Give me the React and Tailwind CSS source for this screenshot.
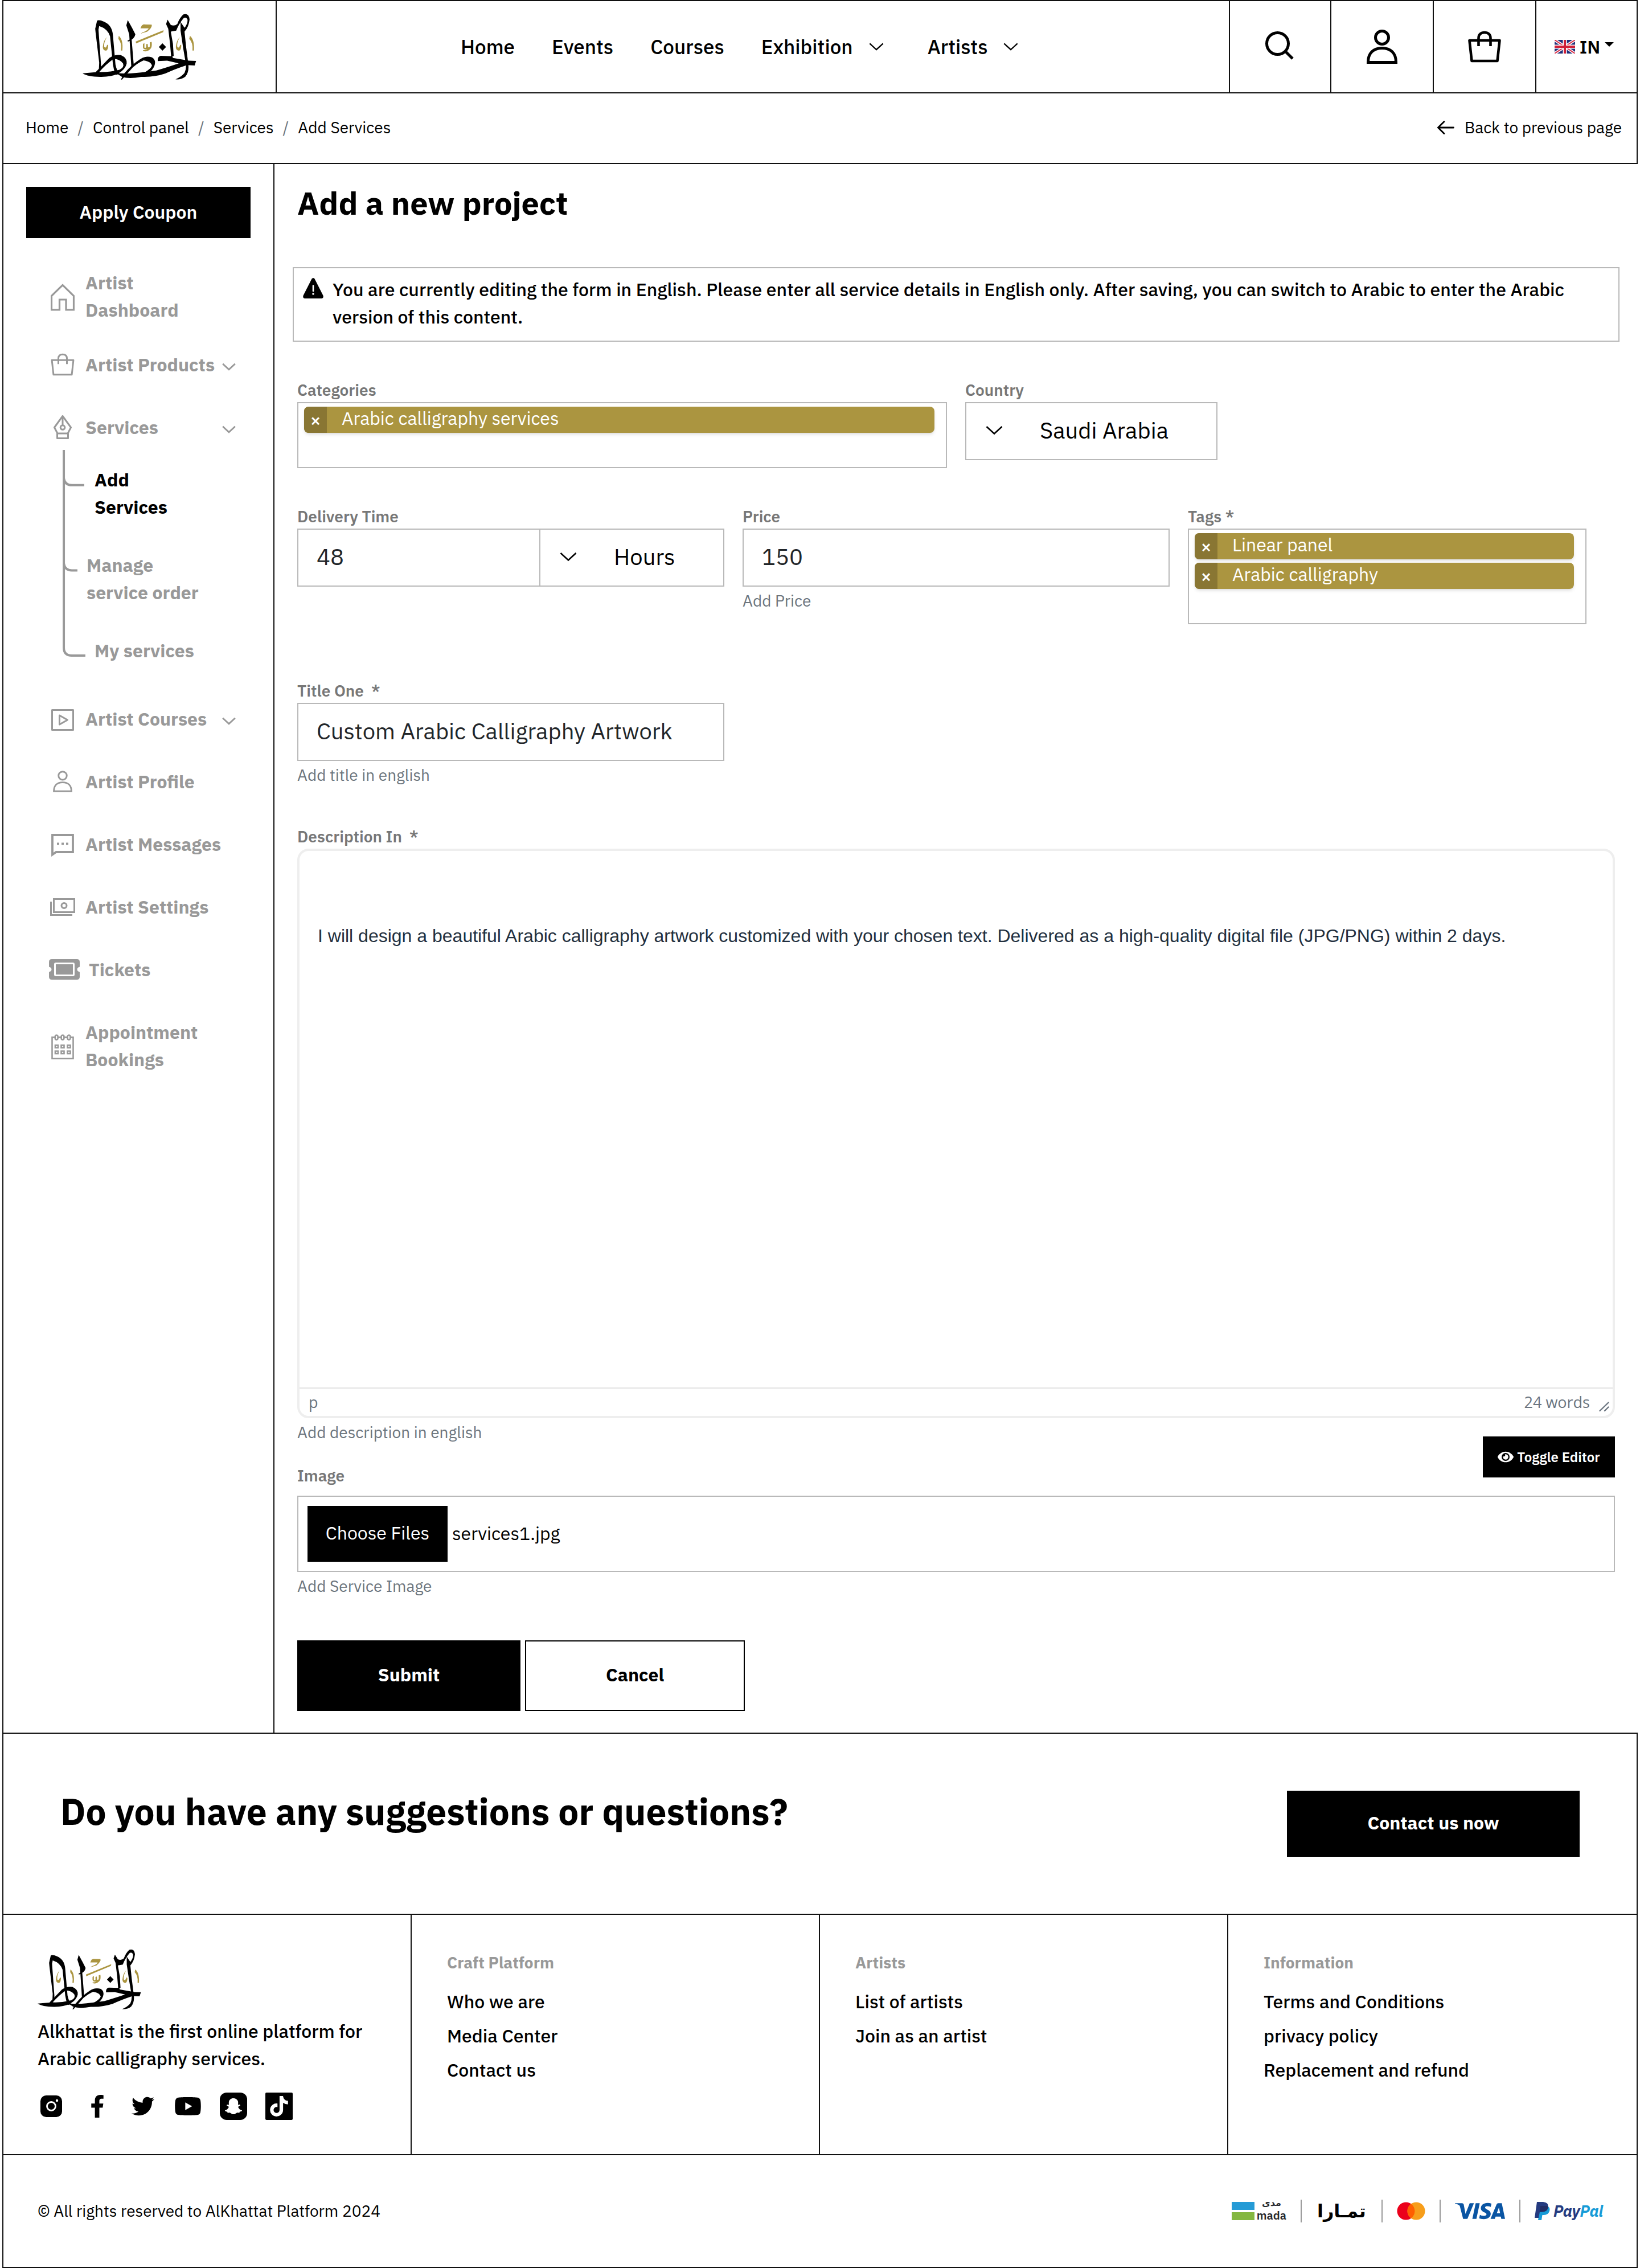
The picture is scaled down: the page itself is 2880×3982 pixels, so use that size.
import React from "react";
import { FaEye, FaFacebookF, FaSnapchatGhost, FaTiktok, FaTwitter, FaYoutube } from "react-icons/fa";
import { SiVisa } from "react-icons/si";

const line = "border-[#111111]";
const fieldBorder = "border-2 border-[#b9b9b9]";
const labelClass = "block text-[28px] leading-[42px] font-semibold text-[#777777]";
const helpClass = "mt-1 block text-[28px] leading-[42px] text-[#6c757d]";

function Logo({ className }) {
  return (
    <svg className={className} viewBox="226 70 315 351" preserveAspectRatio="none" role="img" aria-label="Alkhattat">
      <g fill="#000">
        <path d="M261 150 L266 108 Q270 100 285 112 Q308 130 310 185 L317 340 Q320 370 328 390 L318 395 Q312 370 310 340 L302 190 Q295 150 272 136 L270 155 L277 340 L277 355 L271 372 L272 330 L262 170 Z" />
        <path fillRule="evenodd" d="M226 387 L262 381 Q285 335 300 305 Q315 285 332 290 Q350 305 348 335 Q345 365 325 388 Q305 407 275 406 Q240 405 226 387 Z M272 380 Q290 340 312 310 Q330 312 338 335 Q342 355 328 368 Q300 382 272 380 Z" />
        <path d="M351 104 L363 146 L372 180 Q370 205 352 218 L350 214 Q361 205 361 190 L367 330 L368 345 L361 357 L355 180 L347 132 Z" />
        <path d="M318 385 Q345 392 375 385 Q400 380 430 372 Q465 352 492 334 L460 320 L434 322 Q433 298 442 294 L474 296 L476 305 L520 320 L540 321 L536 345 L515 343 Q480 365 455 388 Q425 408 388 406 Q355 418 335 406 Z" />
        <path d="M340 390 Q362 340 385 312 Q400 292 418 302 Q430 315 425 345 Q420 372 405 390 L393 387 Q416 362 418 345 Q415 325 395 318 Q380 330 365 355 L350 388 L335 420 L332 420 Z" />
        <path d="M447 227 L457 247 L447 267 L437 247 Z" />
        <path d="M461 102 L470 130 Q480 138 488 125 Q495 90 505 74 Q520 66 522 100 Q520 140 508 165 L512 240 L518 330 Q522 380 510 405 Q498 422 483 419 Q500 405 508 385 Q513 365 512 340 L504 250 L497 160 L497 114 L508 145 Q518 120 516 100 Q512 85 505 95 Q492 125 485 160 L470 165 L476 230 L478 295 L471 300 L468 230 L463 150 L457 125 Z" />
      </g>
      <g fill="#ab9540">
        <path d="M395 127 L417 128 Q420 142 405 165 L387 176 Q388 172 400 163 Q410 152 408 148 L386 148 L390 132 Z" />
        <path d="M373 218 L450 158 L449 168 L374 228 Z" />
        <path d="M326 188 Q339 208 336 266 L332 266 Q335 225 325 204 Z" />
        <path d="M523 188 Q536 208 534 266 L530 266 Q532 225 521 204 Z" />
        <path d="M293 194 Q284 225 286 247 Q291 257 294 235 L297 238 Q297 262 291 267 Q282 266 282 247 Q283 215 293 194 Z" />
        <path d="M495 194 Q486 225 488 247 Q493 257 496 235 L499 238 Q499 262 493 267 Q484 266 484 247 Q485 215 495 194 Z" />
        <path d="M397 226 L397 250 Q400 254 402 248 L402 232 L406 230 L407 248 Q410 252 412 244 L412 222 L417 220 Q419 250 413 258 Q405 274 394 269 L393 264 Q403 264 405 258 Q396 264 393 250 L393 232 Z" />
      </g>
    </svg>
  );
}

function Chevron({ className, strokeWidth = "2.6" }) {
  return (
    <svg className={className} viewBox="0 0 30 16" fill="none" stroke="currentColor" strokeWidth={strokeWidth} aria-hidden="true">
      <path d="M1.5 1.5 L15 14 L28.5 1.5" />
    </svg>
  );
}

function PersonIcon({ className, strokeWidth }) {
  return (
    <svg className={className} viewBox="0 0 54 60" fill="none" stroke="currentColor" strokeWidth={strokeWidth} aria-hidden="true">
      <circle cx="27" cy="14" r="11.5" />
      <path d="M2.5 57.5 C2.5 41 12 32.5 27 32.5 S51.5 41 51.5 57.5 Z" />
    </svg>
  );
}

function BagIcon({ className, strokeWidth }) {
  return (
    <svg className={className} viewBox="0 0 58 56" fill="none" stroke="currentColor" strokeWidth={strokeWidth} strokeLinejoin="round" aria-hidden="true">
      <path d="M2.5 17 H55.5 L51.5 53 H6.5 Z" />
      <path d="M18.5 27 V13 C18.5 6 23 3 29 3 S39.5 6 39.5 13 V27" />
    </svg>
  );
}

function HomeIcon() {
  return (
    <svg className="mt-1 h-12 w-[42px]" viewBox="0 0 42 48" fill="none" stroke="currentColor" strokeWidth="3.2" aria-hidden="true">
      <path d="M1.5 46 V21.5 L21 2.5 L40.5 21.5 V46 H27 V28 H15.5 V46 Z" />
    </svg>
  );
}

function NibIcon() {
  return (
    <svg className="h-[42px] w-8" viewBox="0 0 32 42" fill="none" stroke="currentColor" strokeWidth="3" strokeLinejoin="round" aria-hidden="true">
      <path d="M16 1.5 L30.5 21.5 L25 32 H7 L1.5 21.5 Z M6.5 32 V40.5 H25.5 V32 M16 2 V18" />
      <circle cx="16" cy="21.5" r="3.8" />
    </svg>
  );
}

function PlayIcon() {
  return (
    <svg className="mt-1 h-[38px] w-10" viewBox="0 0 40 38" fill="none" stroke="currentColor" strokeWidth="3" strokeLinejoin="round" aria-hidden="true">
      <path d="M1.5 1.5 H38.5 V36.5 H1.5 Z M14.5 11 L28.5 19 L14.5 27 Z" />
    </svg>
  );
}

function MessageIcon() {
  return (
    <svg className="mt-1 h-10 w-10" viewBox="0 0 40 40" fill="none" stroke="currentColor" strokeWidth="3.8" aria-hidden="true">
      <path d="M2 2 H38 V32 H8.5 L2 36.500 Z" />
      <path d="M10 17.5 H14 M18 17.5 H22 M26 17.5 H30" strokeWidth="4" />
    </svg>
  );
}

function CashIcon() {
  return (
    <svg className="h-[31px] w-11" viewBox="0 0 44 31" fill="none" stroke="currentColor" strokeWidth="3" aria-hidden="true">
      <path d="M6.5 1.5 H42.5 V24.5 H6.5 Z M1.5 6 V29.5 H39" />
      <circle cx="24.5" cy="13" r="4.5" />
    </svg>
  );
}

function TicketIcon() {
  return (
    <svg className="h-9 w-[54px]" viewBox="0 0 54 36" aria-hidden="true">
      <path fill="currentColor" fillRule="evenodd" d="M5 0 H49 Q54 0 54 5 V13.5 Q49.5 14.5 49.5 18 T54 22.5 V31 Q54 36 49 36 H5 Q0 36 0 31 V22.5 Q4.500 21.5 4.5 18 T0 13.5 V5 Q0 0 5 0 Z M12 6 Q9 6 9 9 V27 Q9 30 12 30 H42 Q45 30 45 27 V9 Q45 6 42 6 Z" />
      <rect x="12" y="9" width="30" height="18" fill="currentColor" />
    </svg>
  );
}

function CalendarIcon() {
  return (
    <svg className="mt-1 h-11 w-10" viewBox="0 0 40 44" fill="none" stroke="currentColor" strokeWidth="2.6" aria-hidden="true">
      <path d="M6 5 H1.5 V42.5 H38.5 V5 H34 M12 5 H17.5 M22.5 5 H28" />
      <rect x="6.8" y="1.5" width="4.8" height="8" rx="2.4" />
      <rect x="17.6" y="1.5" width="4.8" height="8" rx="2.4" />
      <rect x="28.6" y="1.5" width="4.8" height="8" rx="2.4" />
      <path d="M7 19 H12 V23.5 H7 Z M17.5 19 H22.5 V23.5 H17.5 Z M28.5 19 H33.5 V23.5 H28.5 Z M7 29.5 H12 V34 H7 Z M17.5 29.5 H22.5 V34 H17.5 Z M28.5 29.5 H33.5 V34 H28.5 Z" />
    </svg>
  );
}

function Flag() {
  return (
    <svg className="h-6 w-9" viewBox="0 0 36 24" aria-hidden="true">
      <rect width="36" height="24" fill="#1f2f7a" />
      <path d="M0 0 L36 24 M36 0 L0 24" stroke="#fff" strokeWidth="5" />
      <path d="M0 0 L36 24 M36 0 L0 24" stroke="#d8304a" strokeWidth="2" />
      <path d="M18 0 V24 M0 12 H36" stroke="#fff" strokeWidth="7" />
      <path d="M18 0 V24 M0 12 H36" stroke="#cf1f38" strokeWidth="4" />
    </svg>
  );
}

const navLinks = [
  { label: "Home" },
  { label: "Events" },
  { label: "Courses" },
  { label: "Exhibition", menu: true },
  { label: "Artists", menu: true },
];

function Header() {
  return (
    <header className={`flex h-[164px] border-2 ${line}`}>
      <a href="#" className={`flex w-[480px] items-center justify-center border-r-2 ${line}`}>
        <Logo className="h-[116px] w-[200px]" />
      </a>
      <nav className="flex flex-1 items-center gap-[65px] pl-[323px] text-[35px] leading-[52px] font-medium">
        {navLinks.map((item) => (
          <a key={item.label} href="#" className={item.menu ? "flex items-center gap-7 pr-3" : ""}>
            {item.label}
            {item.menu && <Chevron className="h-4 w-[26px]" />}
          </a>
        ))}
      </nav>
      <button aria-label="Search" className={`flex w-[178px] items-center justify-center border-l-2 ${line} pr-0.5 pb-1`}>
        <svg className="h-[50px] w-[50px]" viewBox="0 0 50 50" fill="none" stroke="currentColor" strokeWidth="5">
          <circle cx="21.5" cy="21.5" r="19" />
          <path d="M35 35 L48 48" />
        </svg>
      </button>
      <button aria-label="Account" className={`flex w-[180px] items-center justify-center border-l-2 ${line}`}>
        <PersonIcon className="h-[60px] w-[54px]" strokeWidth="5" />
      </button>
      <button aria-label="Cart" className={`flex w-[180px] items-center justify-center border-l-2 ${line}`}>
        <BagIcon className="h-14 w-[58px]" strokeWidth="4.6" />
      </button>
      <button className={`flex w-[178px] items-center justify-center gap-2 border-l-2 ${line} pr-2`}>
        <Flag />
        <span className="text-[32px] leading-[48px] font-semibold">IN</span>
        <svg className="mb-2 h-2 w-4" viewBox="0 0 16 8" aria-hidden="true">
          <path d="M0 0 H16 L8 8 Z" />
        </svg>
      </button>
    </header>
  );
}

const crumbs = ["Home", "Control panel", "Services", "Add Services"];

function Breadcrumb() {
  return (
    <div className={`flex h-[124px] items-center justify-between border-x-2 border-b-2 ${line} pr-[26px] pb-0.5 pl-[39px] text-[28px] leading-[42px]`}>
      <nav aria-label="Breadcrumb">
        <ol className="flex gap-4">
          {crumbs.map((crumb, i) => (
            <li key={crumb} className="flex gap-4">
              {i > 0 && <span className="text-[#6c757d]">/</span>}
              <a href="#">{crumb}</a>
            </li>
          ))}
        </ol>
      </nav>
      <a href="#" className="flex items-center gap-[18px]">
        <svg className="h-6 w-[30px]" viewBox="0 0 30 24" fill="none" stroke="currentColor" strokeWidth="2.8" strokeLinecap="round" aria-hidden="true">
          <path d="M28.5 12 H2 M12 1.5 L1.5 12 L12 22.5" />
        </svg>
        Back to previous page
      </a>
    </div>
  );
}

const iconBox = "flex w-12 shrink-0 justify-center";

function SideLink({ icon, label, menu, wide }) {
  return (
    <a href="#" className="flex items-center gap-4">
      <span className={wide ? "flex w-[54px] shrink-0" : iconBox}>{icon}</span>
      <span className="flex-1 whitespace-pre">{label}</span>
      {menu && <Chevron className="-ml-6 h-3.5 w-6 translate-y-1" strokeWidth="3.6" />}
    </a>
  );
}

function Sidebar() {
  return (
    <aside className={`w-[476px] shrink-0 border-r-2 ${line} px-10 pt-10`}>
      <button className="h-[90px] w-full bg-black pb-0.5 text-[32px] leading-[48px] font-semibold text-white">Apply Coupon</button>
      <nav className="mt-[54px] flex flex-col gap-[62px] pr-[26px] pl-10 text-[32px] leading-[48px] font-bold text-[#999999]">
        <div className="flex flex-col gap-12">
          <SideLink icon={<HomeIcon />} label={"Artist\nDashboard"} />
          <SideLink icon={<BagIcon className="h-10 w-[42px]" strokeWidth="4.2" />} label="Artist Products" menu />
        </div>
        <div className="pb-2.5">
          <SideLink icon={<NibIcon />} label="Services" menu />
          <div className="mt-4 flex pl-6">
            <svg className="h-[363px] w-10 shrink-0" viewBox="0 0 40 364" fill="none" stroke="currentColor" strokeWidth="4" aria-hidden="true">
              <path d="M2 0 V348 Q2 362 16 362 H40" />
              <path d="M2 50 Q4 62 16 62 H38 M2 200 Q4 212 16 212 H26" />
            </svg>
            <ul className="flex flex-col gap-[54px] pt-7 pl-0.5">
              <li><a href="#" className="block pl-3.5 whitespace-pre text-black">{"Add\nServices"}</a></li>
              <li><a href="#" className="block whitespace-pre">{"Manage\nservice order"}</a></li>
              <li><a href="#" className="block pl-3.5">My services</a></li>
            </ul>
          </div>
        </div>
        <SideLink icon={<PlayIcon />} label="Artist Courses" menu />
        <SideLink icon={<PersonIcon className="h-[38px] w-[34px]" strokeWidth="4.6" />} label="Artist Profile" />
        <SideLink icon={<MessageIcon />} label="Artist Messages" />
        <SideLink icon={<CashIcon />} label="Artist Settings" />
        <SideLink icon={<TicketIcon />} label="Tickets" wide />
        <SideLink icon={<CalendarIcon />} label={"Appointment\nBookings"} />
      </nav>
    </aside>
  );
}

function Chip({ children }) {
  return (
    <li className="flex h-[46px] overflow-hidden rounded-lg bg-[#ab9540] text-white shadow-md">
      <button type="button" aria-label={`Remove ${children}`} className="w-10 bg-[#897633] text-[32px] leading-[46px] font-medium">×</button>
      <span className="pl-[26px] text-[32px] leading-[40px]">{children}</span>
    </li>
  );
}

function ChipBox({ labelledBy, items, className }) {
  return (
    <ul aria-labelledby={labelledBy} className={`flex flex-col gap-1.5 ${fieldBorder} pt-1.5 pr-5 pl-2.5 ${className}`}>
      {items.map((item) => <Chip key={item}>{item}</Chip>)}
    </ul>
  );
}

function SelectBox({ id, label, value, className }) {
  return (
    <div className={`relative ${className}`}>
      <select id={id} aria-label={label} defaultValue={value} className={`h-[102px] w-full appearance-none ${fieldBorder} bg-white pb-1 pl-[129px] text-[40px] leading-[60px] text-black`}>
        <option>{value}</option>
      </select>
      <Chevron className="pointer-events-none absolute top-[41px] left-9 h-[17px] w-[30px]" />
    </div>
  );
}

const inputClass = `h-[102px] w-full min-w-0 ${fieldBorder} bg-white px-8 pb-1 text-[40px] leading-[60px] text-[#212529] outline-none`;

function ServiceForm() {
  return (
    <main className="min-w-0 flex-1 px-10 pt-[34px] pb-[38px]">
      <h1 className="text-[56px] leading-[68px] font-bold">Add a new project</h1>
      <div role="note" className={`-mx-2 mt-[79px] flex gap-4 ${fieldBorder} px-4 pt-[13px] pb-[18px]`}>
        <svg className="mt-1 h-9 w-9 shrink-0" viewBox="0 0 36 36" aria-hidden="true">
          <path d="M15.5 1.5 Q18 -1.5 20.5 1.5 L35.5 31 Q36.5 35.5 33 36 H3 Q-0.5 35.5 0.5 31 Z" />
          <path d="M18 13.5 V23" stroke="#fff" strokeWidth="2.6" strokeLinecap="round" />
          <circle cx="18" cy="28" r="1.8" fill="#fff" />
        </svg>
        <p className="text-[32px] leading-[48px] font-medium">
          You are currently editing the form in English. Please enter all service details in English only. After saving, you can switch to Arabic to enter the Arabic version of this content.
        </p>
      </div>

      <form onSubmit={(e) => e.preventDefault()}>
        <div className="mt-16 grid grid-cols-6 gap-x-8">
          <div className="col-span-3">
            <span id="categories-label" className={labelClass}>Categories</span>
            <ChipBox labelledBy="categories-label" items={["Arabic calligraphy services"]} className="h-[116px]" />
          </div>
          <div className="col-span-3">
            <label htmlFor="country" className={labelClass}>Country</label>
            <SelectBox id="country" value="Saudi Arabia" className="w-[443px]" />
          </div>
        </div>

        <div className="mt-16 grid grid-cols-3 gap-x-8">
          <div>
            <label htmlFor="delivery" className={labelClass}>Delivery Time</label>
            <div className="flex">
              <input id="delivery" type="text" defaultValue="48" className={`${inputClass} flex-1`} />
              <SelectBox id="unit" label="Delivery time unit" value="Hours" className="-ml-0.5 w-[325px]" />
            </div>
          </div>
          <div>
            <label htmlFor="price" className={labelClass}>Price</label>
            <input id="price" type="text" defaultValue="150" className={inputClass} />
            <span className={helpClass}>Add Price</span>
          </div>
          <div>
            <span id="tags-label" className={labelClass}>Tags *</span>
            <ChipBox labelledBy="tags-label" items={["Linear panel", "Arabic calligraphy"]} className="h-[168px] w-[700px]" />
          </div>
        </div>

        <div className="mt-24 grid grid-cols-3 gap-x-8">
          <div>
            <label htmlFor="title" className={`${labelClass} whitespace-pre`}>{"Title One  *"}</label>
            <input id="title" type="text" defaultValue="Custom Arabic Calligraphy Artwork" className={inputClass} />
            <span className={helpClass}>Add title in english</span>
          </div>
        </div>

        <label htmlFor="description" className={`${labelClass} mt-[66px] whitespace-pre`}>{"Description In  *"}</label>
        <div className="overflow-hidden rounded-[20px] border-4 border-[#eeeeee]">
          <textarea
            id="description"
            className="block h-[942px] w-full resize-none px-8 pt-[125px] font-['Liberation_Sans',Arial,sans-serif] text-[32px] leading-[48px] text-[#222f3e] outline-none"
            defaultValue="I will design a beautiful Arabic calligraphy artwork customized with your chosen text. Delivered as a high-quality digital file (JPG/PNG) within 2 days."
          />
          <div className="flex h-[50px] items-center border-t-2 border-[#e3e3e3] pr-1.5 pl-4 font-['Open_Sans',sans-serif] text-[27px] leading-[46px] text-[#6b7580]">
            <span className="flex-1">p</span>
            <span>24 words</span>
            <svg className="mt-4 ml-4 h-[18px] w-[18px]" viewBox="0 0 18 18" stroke="currentColor" strokeWidth="2.4" strokeLinecap="round" aria-hidden="true">
              <path d="M1.5 16 L16.5 1.5 M10 16 L16.5 9.5" />
            </svg>
          </div>
        </div>

        <div className="flex items-start justify-between">
          <div>
            <span className={helpClass}>Add description in english</span>
            <label htmlFor="image" className={`${labelClass} mt-[34px]`}>Image</label>
          </div>
          <button type="button" className="mt-8 flex h-[72px] w-[232px] items-center justify-center gap-1.5 bg-black text-[24px] leading-9 font-semibold text-white">
            <FaEye className="h-7 w-7" aria-hidden="true" />
            Toggle Editor
          </button>
        </div>
        <label htmlFor="image" className={`mt-3.5 flex h-[134px] items-center gap-2 ${fieldBorder} px-4 text-[32px] leading-[48px]`}>
          <input id="image" type="file" multiple className="sr-only" />
          <span className="flex h-[98px] w-[246px] items-center justify-center bg-black pb-1 text-white">Choose Files</span>
          <span className="pb-0.5">services1.jpg</span>
        </label>
        <span className={helpClass}>Add Service Image</span>

        <div className="mt-[74px] flex gap-2 text-[32px] leading-[48px] font-bold">
          <button type="submit" className="h-[124px] w-[392px] bg-black pb-1 text-white">Submit</button>
          <button type="button" className="h-[124px] w-[386px] border-2 border-black bg-white pb-1">Cancel</button>
        </div>
      </form>
    </main>
  );
}

const columns = [
  { title: "Craft Platform", links: ["Who we are", "Media Center", "Contact us"] },
  { title: "Artists", links: ["List of artists", "Join as an artist"] },
  { title: "Information", links: ["Terms and Conditions", "privacy policy", "Replacement and refund"] },
];

function Social() {
  return (
    <div className="mt-9 ml-[5px] flex h-12 items-center">
      <a href="#" aria-label="Instagram" className="flex w-20">
        <svg className="h-[38px] w-[38px]" viewBox="0 0 38 38">
          <rect width="38" height="38" rx="10" />
          <circle cx="19" cy="19" r="7.5" fill="none" stroke="#fff" strokeWidth="2.8" />
          <circle cx="29" cy="9" r="2.2" fill="#fff" />
        </svg>
      </a>
      <a href="#" aria-label="Facebook" className="flex w-20 pl-1"><FaFacebookF className="h-10 w-8" /></a>
      <a href="#" aria-label="Twitter" className="flex w-[75px]"><FaTwitter className="h-10 w-10" /></a>
      <a href="#" aria-label="YouTube" className="flex w-20"><FaYoutube className="h-12 w-12" /></a>
      <a href="#" aria-label="Snapchat" className="flex w-20">
        <span className="flex h-12 w-12 items-center justify-center rounded-xl bg-black"><FaSnapchatGhost className="h-[30px] w-[30px] text-white" /></span>
      </a>
      <a href="#" aria-label="TikTok" className="flex">
        <span className="flex h-12 w-12 items-center justify-center rounded-xs bg-black"><FaTiktok className="h-9 w-9 text-white" /></span>
      </a>
    </div>
  );
}

function Separator() {
  return <span className="h-10 w-0.5 bg-[#999999]" />;
}

function Payments() {
  return (
    <div className="flex items-center gap-[25px] pr-[59px]">
      <div className="flex items-center gap-1">
        <svg className="h-8 w-10" viewBox="0 0 40 32" aria-hidden="true">
          <rect width="40" height="14" fill="#259bd6" />
          <rect y="18" width="40" height="14" fill="#84b740" />
        </svg>
        <span className="flex w-[52px] flex-col items-center pb-1 font-semibold text-[#27292d]">
          <span lang="ar" className="font-['DejaVu_Sans',sans-serif] text-[16px] leading-5">مدى</span>
          <span className="text-[20px] leading-6">mada</span>
        </span>
      </div>
      <Separator />
      <span lang="ar" className="w-[90px] text-center font-['DejaVu_Sans',sans-serif] text-[32px] leading-10 font-bold whitespace-nowrap">تمـارا</span>
      <Separator />
      <svg className="h-8 w-[50px]" viewBox="0 0 50 32" role="img" aria-label="Mastercard">
        <circle cx="16" cy="16" r="15.5" fill="#eb001b" />
        <circle cx="34" cy="16" r="15.5" fill="#f79e1b" />
        <path d="M25 3.4 A15.5 15.5 0 0 1 25 28.6 A15.5 15.5 0 0 1 25 3.4 Z" fill="#ff5f00" />
      </svg>
      <Separator />
      <span className="flex h-8 w-[88px] items-center"><SiVisa className="h-[88px] w-[88px] text-[#0a55a3]" aria-label="Visa" /></span>
      <Separator />
      <span className="flex items-center gap-1.5">
        <svg className="h-8 w-[27px]" viewBox="0 0 27 32" aria-hidden="true">
          <path d="M10 7 H21 Q28 9 26 16 Q24 23 16 23 H13.5 L12 32 H6 Z" fill="#179bd7" />
          <path d="M4 0 H15 Q25 1 23.5 9 Q22 17.5 13 17.5 H9 L7 28 H0 Z" fill="#253b80" />
          <path d="M10 7 H23.7 Q23.7 17.5 13 17.5 H9 L8.5 20 Z" fill="#222d65" />
        </svg>
        <span className="text-[27px] leading-8 font-bold text-[#253b80] italic">Pay<span className="text-[#179bd7]">Pal</span></span>
      </span>
    </div>
  );
}

function Footer() {
  return (
    <footer className={`border-2 ${line}`}>
      <section className={`flex items-start justify-between border-b-2 ${line} pt-[98px] pr-[100px] pb-[100px] pl-[100px]`}>
        <h2 className="text-[64px] leading-[77px] font-bold">Do you have any suggestions or questions?</h2>
        <button className="mt-0.5 h-[116px] w-[514px] bg-black pb-1 text-[32px] leading-[48px] font-bold text-white">Contact us now</button>
      </section>
      <section className={`grid min-h-[422px] grid-cols-4 border-b-2 ${line}`}>
        <div className={`border-r-2 ${line} px-[60px] pt-[60px]`}>
          <Logo className="h-[106px] w-[182px]" />
          <p className="mt-3.5 text-[32px] leading-[48px] font-medium">Alkhattat is the first online platform for Arabic calligraphy services.</p>
          <Social />
        </div>
        {columns.map((col, i) => (
          <div key={col.title} className={`${i < 2 ? "border-r-2" : ""} ${line} pt-[63px] pl-[62px]`}>
            <h3 className="text-[28px] leading-[42px] font-bold text-[#999999]">{col.title}</h3>
            <ul className="mt-[23px] flex flex-col gap-3 text-[32px] leading-[48px] font-medium">
              {col.links.map((link) => <li key={link}><a href="#">{link}</a></li>)}
            </ul>
          </div>
        ))}
      </section>
      <div className="flex h-[196px] items-center justify-between pl-[60px] text-[28px] leading-[42px]">
        <p>© All rights reserved to AlKhattat Platform 2024</p>
        <Payments />
      </div>
    </footer>
  );
}

export default function App() {
  return (
    <div className="bg-white px-1 font-['IBM_Plex_Sans','Open_Sans',sans-serif] text-black">
      <Header />
      <Breadcrumb />
      <div className={`flex border-l-2 ${line}`}>
        <Sidebar />
        <ServiceForm />
      </div>
      <Footer />
    </div>
  );
}
